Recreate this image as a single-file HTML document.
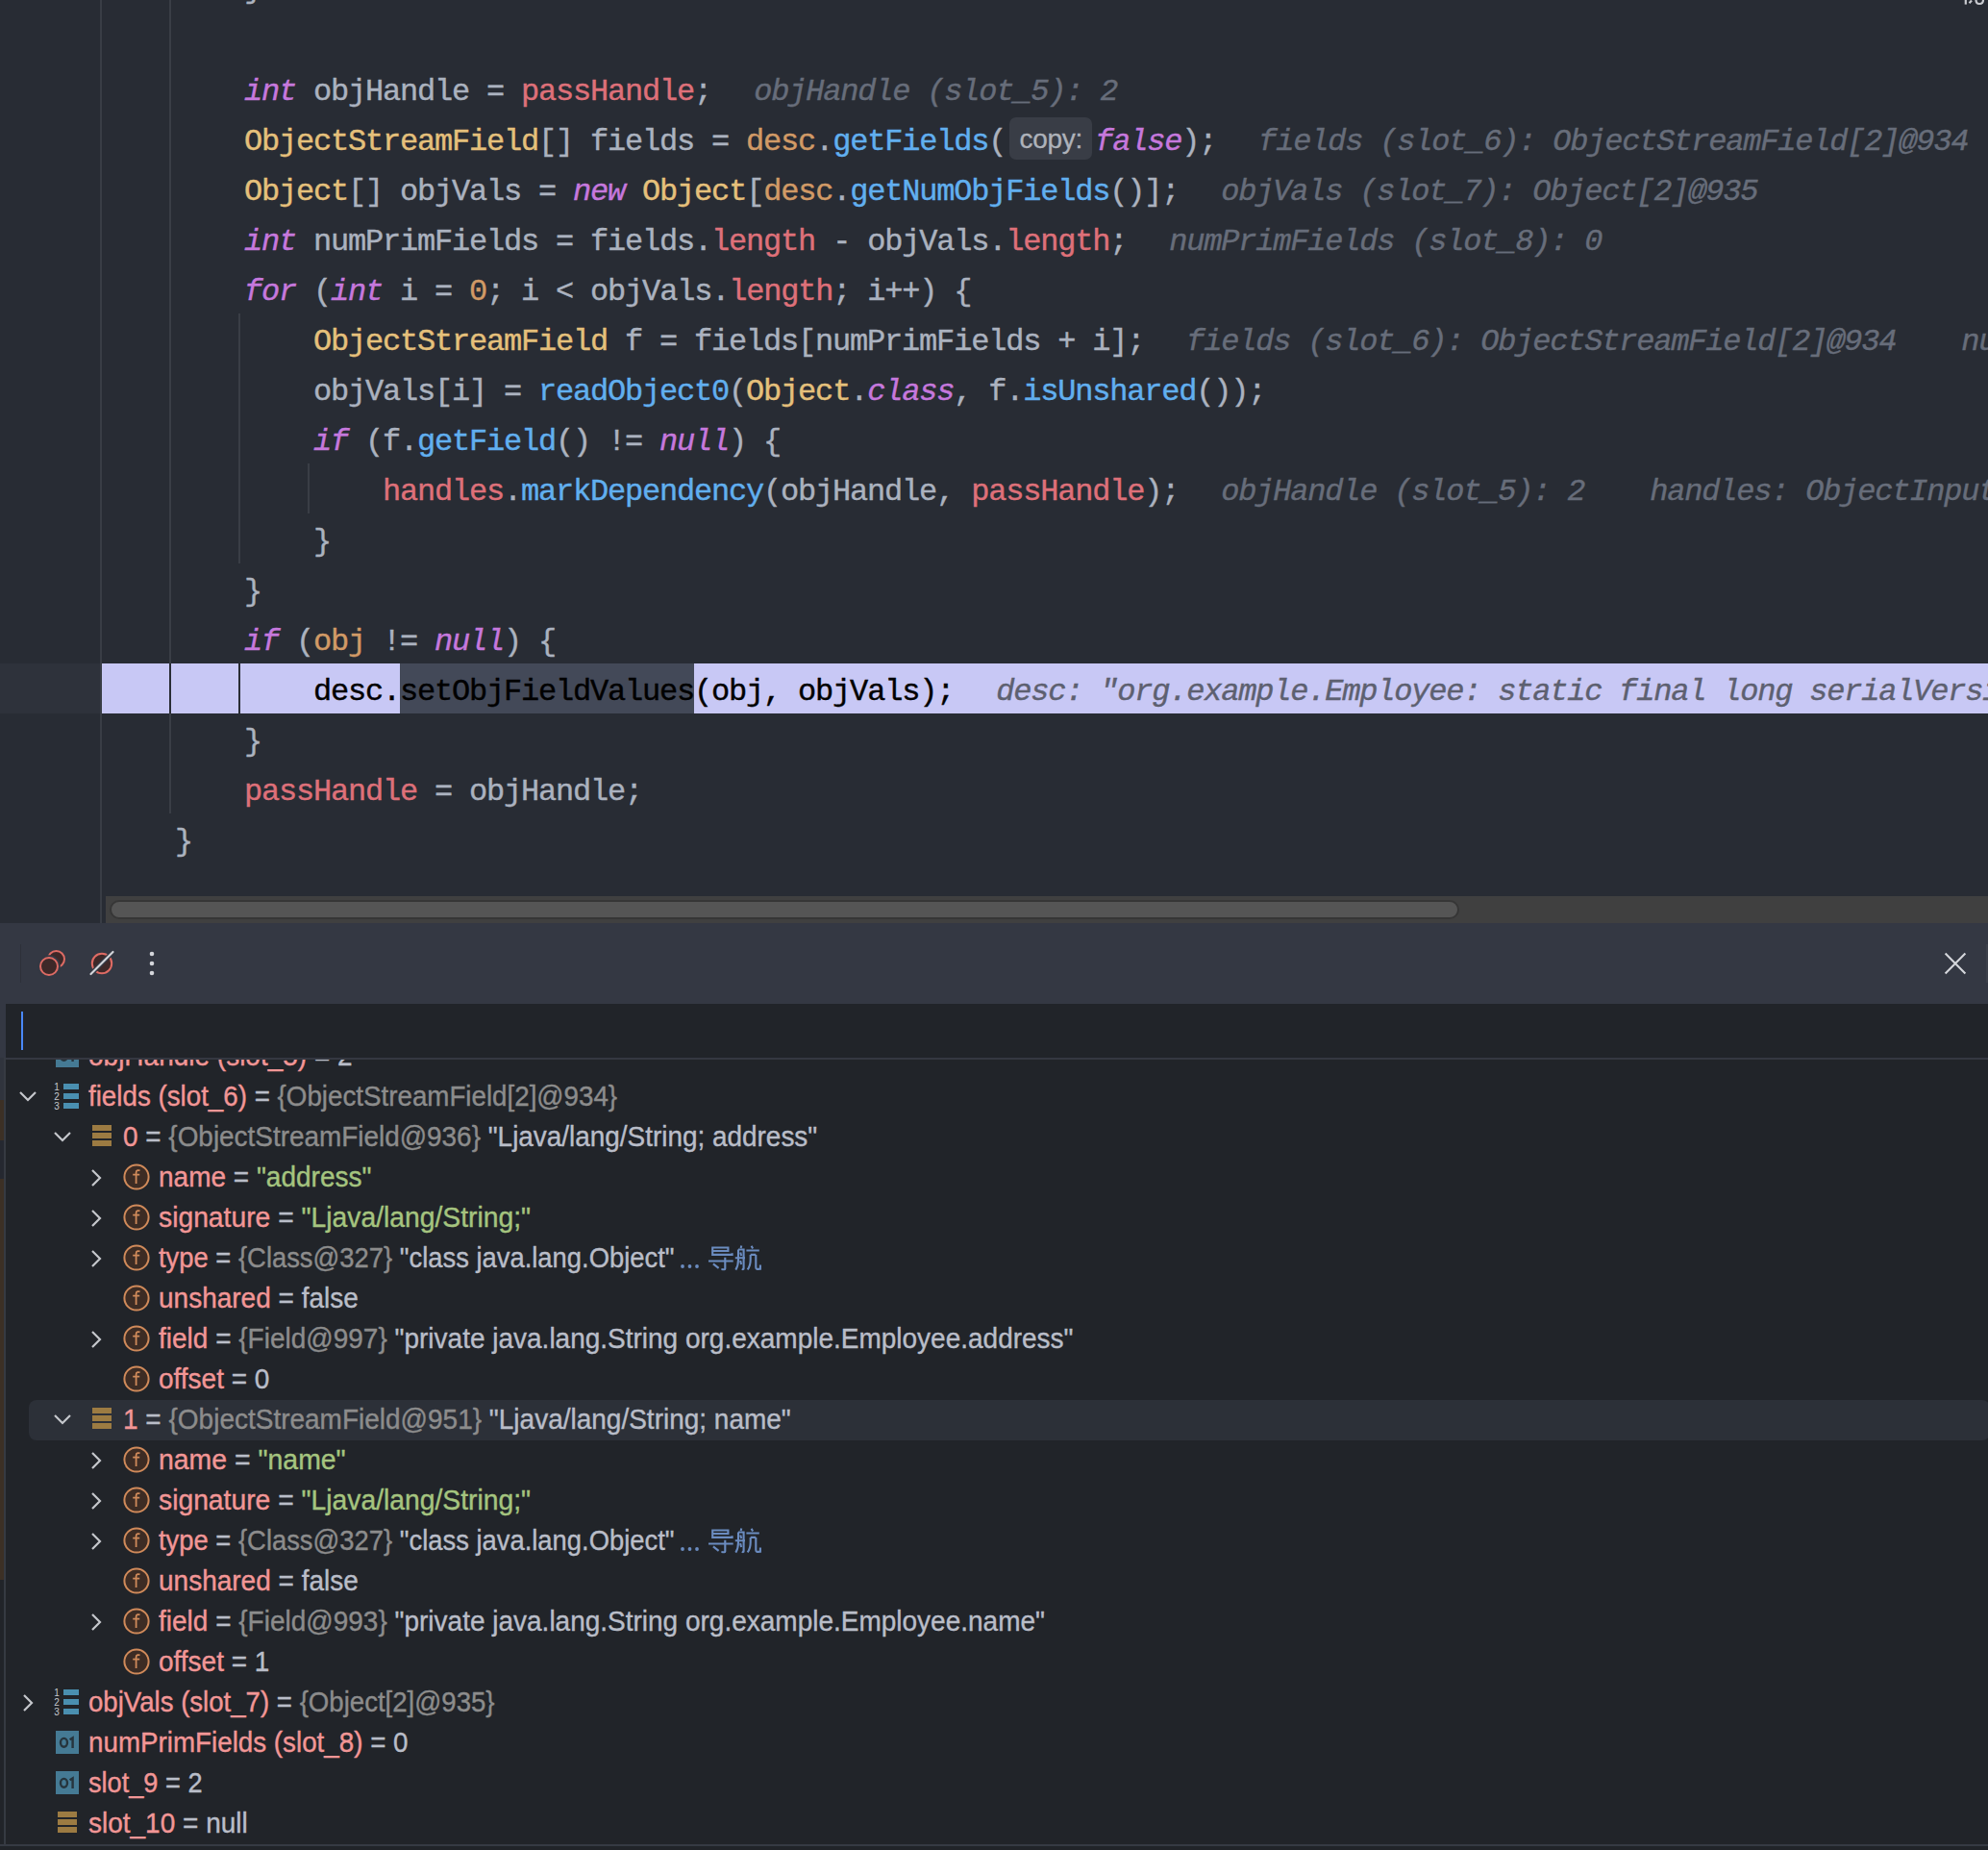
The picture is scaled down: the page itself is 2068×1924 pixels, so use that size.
<!DOCTYPE html><html><head><meta charset="utf-8"><style>
*{margin:0;padding:0;box-sizing:border-box}
html,body{width:2068px;height:1924px;overflow:hidden;background:#282c34}
body{position:relative}
.abs{position:absolute}
.code{position:absolute;font-family:"Liberation Mono",monospace;font-size:32px;letter-spacing:-1.2px;line-height:52px;height:52px;padding-top:4px;white-space:pre;color:#abb2bf;-webkit-text-stroke:0.4px}
.i{font-style:italic}
.hint{font-style:italic;color:#676d7a;margin-left:44px}
.ui{font-family:"Liberation Sans",sans-serif}
</style></head><body>
<div class="abs" style="left:0;top:0;width:2068px;height:960px;background:#282c34;overflow:hidden"><div class="abs" style="left:104px;top:0;width:2px;height:960px;background:#393d45"></div><div class="abs" style="left:0;top:690px;width:104px;height:52px;background:#2e323b"></div><div class="abs" style="left:106px;top:690px;width:1962px;height:52px;background:#c8c8f5"></div><div class="abs" style="left:416px;top:690px;width:306px;height:52px;background:#434958"></div><div class="abs" style="left:176px;top:0;width:2px;height:846px;background:#3a3e46"></div><div class="abs" style="left:248px;top:326px;width:2px;height:260px;background:#3a3e46"></div><div class="abs" style="left:320px;top:482px;width:2px;height:52px;background:#3a3e46"></div><div class="abs" style="left:176px;top:690px;width:2px;height:52px;background:#2a2d35"></div><div class="abs" style="left:248px;top:690px;width:2px;height:52px;background:#2a2d35"></div><div class="code" style="left:254px;top:-41px">}</div><div class="code" style="left:254px;top:66px"><span class="i" style="color:#c678dd;">int</span> objHandle = <span style="color:#de7079;">passHandle</span>;<span class="hint" style="color:#676d7a;margin-left:44px">objHandle (slot_5): 2</span></div><div class="code" style="left:254px;top:118px"><span style="color:#e5c07b;">ObjectStreamField</span>[] fields = <span style="color:#d19a66;">desc</span>.<span style="color:#61afef;">getFields</span>(<span style="display:inline-block;width:93px;height:52px;vertical-align:top;position:relative"><span class="ui" style="position:absolute;left:4px;top:0px;width:86px;height:44px;padding-top:1px;border-radius:7px;background:#393d46;color:#aeb2ba;font-size:28px;line-height:44px;text-align:center;-webkit-text-stroke:0.3px;letter-spacing:-0.3px">copy:</span></span><span class="i" style="color:#c678dd;">false</span>);<span class="hint" style="color:#676d7a;margin-left:44px">fields (slot_6): ObjectStreamField[2]@934</span></div><div class="code" style="left:254px;top:170px"><span style="color:#e5c07b;">Object</span>[] objVals = <span class="i" style="color:#c678dd;">new</span> <span style="color:#e5c07b;">Object</span>[<span style="color:#d19a66;">desc</span>.<span style="color:#61afef;">getNumObjFields</span>()];<span class="hint" style="color:#676d7a;margin-left:44px">objVals (slot_7): Object[2]@935</span></div><div class="code" style="left:254px;top:222px"><span class="i" style="color:#c678dd;">int</span> numPrimFields = fields.<span style="color:#de7079;">length</span> - objVals.<span style="color:#de7079;">length</span>;<span class="hint" style="color:#676d7a;margin-left:44px">numPrimFields (slot_8): 0</span></div><div class="code" style="left:254px;top:274px"><span class="i" style="color:#c678dd;">for</span> (<span class="i" style="color:#c678dd;">int</span> i = <span style="color:#d19a66;">0</span>; i &lt; objVals.<span style="color:#de7079;">length</span>; i++) {</div><div class="code" style="left:326px;top:326px"><span style="color:#e5c07b;">ObjectStreamField</span> f = fields[numPrimFields + i];<span class="hint" style="color:#676d7a;margin-left:44px">fields (slot_6): ObjectStreamField[2]@934</span><span class="hint" style="color:#676d7a;margin-left:68px">numPrimFields (slot_8): 0</span></div><div class="code" style="left:326px;top:378px">objVals[i] = <span style="color:#61afef;">readObject0</span>(<span style="color:#e5c07b;">Object</span>.<span class="i" style="color:#c678dd;">class</span>, f.<span style="color:#61afef;">isUnshared</span>());</div><div class="code" style="left:326px;top:430px"><span class="i" style="color:#c678dd;">if</span> (f.<span style="color:#61afef;">getField</span>() != <span class="i" style="color:#c678dd;">null</span>) {</div><div class="code" style="left:398px;top:482px"><span style="color:#de7079;">handles</span>.<span style="color:#61afef;">markDependency</span>(objHandle, <span style="color:#de7079;">passHandle</span>);<span class="hint" style="color:#676d7a;margin-left:44px">objHandle (slot_5): 2</span><span class="hint" style="color:#676d7a;margin-left:68px">handles: ObjectInputStream$HandleTable@1000</span></div><div class="code" style="left:326px;top:534px">}</div><div class="code" style="left:254px;top:586px">}</div><div class="code" style="left:254px;top:638px"><span class="i" style="color:#c678dd;">if</span> (<span style="color:#d19a66;">obj</span> != <span class="i" style="color:#c678dd;">null</span>) {</div><div class="code" style="left:326px;top:690px"><span style="color:#000;">desc.</span><span style="color:#000">setObjFieldValues</span><span style="color:#000;">(obj, objVals);</span><span class="hint" style="color:#5d6070;margin-left:44px">desc: &quot;org.example.Employee: static final long serialVersionUID&quot;</span></div><div class="code" style="left:254px;top:742px">}</div><div class="code" style="left:254px;top:794px"><span style="color:#de7079;">passHandle</span> = objHandle;</div><div class="code" style="left:182px;top:846px">}</div><div class="abs" style="left:110px;top:932px;width:1958px;height:28px;background:#404040"></div><div class="abs" style="left:114px;top:936px;width:1404px;height:20px;border-radius:10px;background:#555555;border:2px solid #363636"></div><svg class="abs" style="left:2040px;top:0" width="28" height="6" viewBox="0 0 28 6"><g fill="none" stroke="#c9cbd0" stroke-width="2.2"><path d="M4.8 0V4.6"/><path d="M8.5 3.2L11 0.5"/><path d="M15.5 0C15.5 3.5 17 4 19 4C21 4 23 3.5 23 0"/></g></svg></div><div class="abs" style="left:0;top:960px;width:2068px;height:84px;background:#343843"></div><div class="abs" style="left:21px;top:982px;width:1px;height:40px;background:#2d3039"></div><div class="abs" style="left:2066px;top:982px;width:2px;height:40px;background:#3c404a"></div><svg class="abs" style="left:30px;top:980px" width="150" height="44" viewBox="0 0 150 44">
<circle cx="28.5" cy="17.5" r="8.5" fill="#3e2828" stroke="#de6b64" stroke-width="2"/>
<circle cx="21" cy="25" r="11.8" fill="#343843"/>
<circle cx="21" cy="25" r="9" fill="#3e2828" stroke="#de6b64" stroke-width="2"/>
<circle cx="76" cy="22" r="10.2" fill="#3e2828" stroke="#de6b64" stroke-width="2"/>
<line x1="64.5" y1="33" x2="87.5" y2="10" stroke="#343843" stroke-width="5"/>
<line x1="64.5" y1="33" x2="87.5" y2="10" stroke="#d4d6db" stroke-width="2.2" stroke-linecap="round"/>
<circle cx="128" cy="12" r="2.3" fill="#d4d6db"/><circle cx="128" cy="22" r="2.3" fill="#d4d6db"/><circle cx="128" cy="32" r="2.3" fill="#d4d6db"/>
</svg><svg class="abs" style="left:2020px;top:988px" width="28" height="28" viewBox="0 0 28 28"><path d="M3.6 3.6L24.4 24.4M24.4 3.6L3.6 24.4" stroke="#d4d6db" stroke-width="2.1"/></svg><div class="abs" style="left:0;top:1044px;width:2068px;height:880px;background:#212429"></div><div class="abs" style="left:0;top:1044px;width:6px;height:56px;background:#343843"></div><div class="abs" style="left:6px;top:1044px;width:2062px;height:56px;background:#212429"></div><div class="abs" style="left:22px;top:1052px;width:2px;height:40px;background:#4a88f7"></div><div class="abs" style="left:6px;top:1100px;width:2062px;height:2px;background:#353841"></div><div class="abs" style="left:0;top:1100px;width:4px;height:44px;background:#30343d"></div><div class="abs" style="left:0;top:1144px;width:4px;height:42px;background:#3c3025"></div><div class="abs" style="left:0;top:1186px;width:4px;height:40px;background:#252830"></div><div class="abs" style="left:0;top:1226px;width:4px;height:417px;background:#3c3025"></div><div class="abs" style="left:4px;top:1100px;width:2px;height:818px;background:#363a42"></div><div class="abs" style="left:0;top:1918px;width:2068px;height:2px;background:#363a43"></div><div class="abs" style="left:6px;top:1102px;width:2062px;height:815px;overflow:hidden"><div class="abs" style="left:24px;top:354px;width:2040px;height:42px;border-radius:8px;background:#2c3038"></div><svg class="abs" style="left:52px;top:-16px" width="24" height="24" viewBox="0 0 24 24"><rect width="24" height="24" fill="#457a94"/><ellipse cx="8.5" cy="12.3" rx="3.5" ry="4.4" fill="none" stroke="#26343c" stroke-width="2.4"/><path d="M14.6 9.2L17.6 7.4V18" fill="none" stroke="#26343c" stroke-width="2.4"/></svg><div class="abs ui" style="left:86px;top:-25px;height:42px;line-height:42px;font-size:30px;white-space:pre;transform:scaleX(0.9330);transform-origin:0 0;-webkit-text-stroke:0.4px"><span style="color:#f29696">objHandle (slot_5)</span><span style="color:#b9bdc8"> = </span><span style="color:#b9bdc8">2</span></div><svg class="abs" style="left:13px;top:31px" width="20" height="14" viewBox="0 0 20 14"><path d="M2 3L10 11L18 3" fill="none" stroke="#c5c7cc" stroke-width="2.2"/></svg><svg class="abs" style="left:49px;top:23px" width="28" height="30" viewBox="0 0 28 30"><text x="4" y="9" text-anchor="middle" font-family="Liberation Sans" font-size="10" fill="#c5c7cc">1</text><text x="4" y="19" text-anchor="middle" font-family="Liberation Sans" font-size="10" fill="#c5c7cc">2</text><text x="4" y="29" text-anchor="middle" font-family="Liberation Sans" font-size="10" fill="#c5c7cc">3</text><rect x="11" y="2" width="16" height="6" fill="#4a8fb0"/><rect x="11" y="12" width="16" height="6" fill="#4a8fb0"/><rect x="11" y="22" width="16" height="6" fill="#4a8fb0"/></svg><div class="abs ui" style="left:86px;top:17px;height:42px;line-height:42px;font-size:30px;white-space:pre;transform:scaleX(0.9246);transform-origin:0 0;-webkit-text-stroke:0.4px"><span style="color:#f29696">fields (slot_6)</span><span style="color:#b9bdc8"> = </span><span style="color:#8c8c8c">{ObjectStreamField[2]@934}</span></div><svg class="abs" style="left:49px;top:73px" width="20" height="14" viewBox="0 0 20 14"><path d="M2 3L10 11L18 3" fill="none" stroke="#c5c7cc" stroke-width="2.2"/></svg><svg class="abs" style="left:90px;top:68px" width="20" height="22" viewBox="0 0 20 22"><rect x="0" y="0" width="20" height="6" fill="#9c7b42"/><rect x="0" y="8" width="20" height="6" fill="#9c7b42"/><rect x="0" y="16" width="20" height="6" fill="#9c7b42"/></svg><div class="abs ui" style="left:122px;top:59px;height:42px;line-height:42px;font-size:30px;white-space:pre;transform:scaleX(0.9302);transform-origin:0 0;-webkit-text-stroke:0.4px"><span style="color:#f29696">0</span><span style="color:#b9bdc8"> = </span><span style="color:#8c8c8c">{ObjectStreamField@936}</span><span style="color:#b9bdc8"> &quot;Ljava/lang/String; address&quot;</span></div><svg class="abs" style="left:87px;top:113px" width="14" height="20" viewBox="0 0 14 20"><path d="M3 2L11 10L3 18" fill="none" stroke="#c5c7cc" stroke-width="2.2"/></svg><svg class="abs" style="left:122px;top:108px" width="28" height="28" viewBox="0 0 28 28"><circle cx="14" cy="14" r="12.6" fill="#3d2c24" stroke="#d08a5a" stroke-width="2"/><path d="M17.5 7.5C16.5 6.8 13.6 6.6 13.6 9.4V21M10.2 11.6H17.2" fill="none" stroke="#d08a5a" stroke-width="1.8"/></svg><div class="abs ui" style="left:159px;top:101px;height:42px;line-height:42px;font-size:30px;white-space:pre;transform:scaleX(0.9330);transform-origin:0 0;-webkit-text-stroke:0.4px"><span style="color:#f29696">name</span><span style="color:#b9bdc8"> = </span><span style="color:#a5c47f">&quot;address&quot;</span></div><svg class="abs" style="left:87px;top:155px" width="14" height="20" viewBox="0 0 14 20"><path d="M3 2L11 10L3 18" fill="none" stroke="#c5c7cc" stroke-width="2.2"/></svg><svg class="abs" style="left:122px;top:150px" width="28" height="28" viewBox="0 0 28 28"><circle cx="14" cy="14" r="12.6" fill="#3d2c24" stroke="#d08a5a" stroke-width="2"/><path d="M17.5 7.5C16.5 6.8 13.6 6.6 13.6 9.4V21M10.2 11.6H17.2" fill="none" stroke="#d08a5a" stroke-width="1.8"/></svg><div class="abs ui" style="left:159px;top:143px;height:42px;line-height:42px;font-size:30px;white-space:pre;transform:scaleX(0.9423);transform-origin:0 0;-webkit-text-stroke:0.4px"><span style="color:#f29696">signature</span><span style="color:#b9bdc8"> = </span><span style="color:#a5c47f">&quot;Ljava/lang/String;&quot;</span></div><svg class="abs" style="left:87px;top:197px" width="14" height="20" viewBox="0 0 14 20"><path d="M3 2L11 10L3 18" fill="none" stroke="#c5c7cc" stroke-width="2.2"/></svg><svg class="abs" style="left:122px;top:192px" width="28" height="28" viewBox="0 0 28 28"><circle cx="14" cy="14" r="12.6" fill="#3d2c24" stroke="#d08a5a" stroke-width="2"/><path d="M17.5 7.5C16.5 6.8 13.6 6.6 13.6 9.4V21M10.2 11.6H17.2" fill="none" stroke="#d08a5a" stroke-width="1.8"/></svg><svg class="abs" style="left:699px;top:192.5px" width="92" height="30" viewBox="0 0 92 30"><g fill="none" stroke="#6b8cc0" stroke-width="2.1" stroke-linecap="butt"><circle cx="5" cy="22" r="1.9" fill="#6b8cc0" stroke="none"/><circle cx="12.5" cy="22" r="1.9" fill="#6b8cc0" stroke="none"/><circle cx="20" cy="22" r="1.9" fill="#6b8cc0" stroke="none"/><g transform="translate(32,0)"><path d="M3.2 2.5H20.4V6H4.2M4.2 2.5V9.9H24.6V8.3"/><path d="M0 16.5H25.7M17.3 12.7V24.4C17.3 25.3 16.5 25.3 13.4 25"/><path d="M4.9 19.4L10.6 23.9"/><path d="M34.3 0.5L33.6 3M31 4.5V15C31 20 30 23 28.3 25.6M31 4.5H36.6V24.2C36.6 25.3 35.9 25.3 34.8 24.6M33.2 7.5L34.2 11M33.1 16L34.1 20M27.8 13.2H38"/><path d="M44.6 0.7L46.1 3.6M39.4 5.5H52.8M43.7 9.9H49.3M43.7 9.9V15C43.7 20 42.5 23 40.6 25.4M49.3 9.9V23C49.3 25 50 25 53.9 24.8V20.4"/></g></g></svg><div class="abs ui" style="left:159px;top:185px;height:42px;line-height:42px;font-size:30px;white-space:pre;transform:scaleX(0.9125);transform-origin:0 0;-webkit-text-stroke:0.4px"><span style="color:#f29696">type</span><span style="color:#b9bdc8"> = </span><span style="color:#8c8c8c">{Class@327}</span><span style="color:#b9bdc8"> &quot;class java.lang.Object&quot;</span></div><svg class="abs" style="left:122px;top:234px" width="28" height="28" viewBox="0 0 28 28"><circle cx="14" cy="14" r="12.6" fill="#3d2c24" stroke="#d08a5a" stroke-width="2"/><path d="M17.5 7.5C16.5 6.8 13.6 6.6 13.6 9.4V21M10.2 11.6H17.2" fill="none" stroke="#d08a5a" stroke-width="1.8"/></svg><div class="abs ui" style="left:159px;top:227px;height:42px;line-height:42px;font-size:30px;white-space:pre;transform:scaleX(0.9330);transform-origin:0 0;-webkit-text-stroke:0.4px"><span style="color:#f29696">unshared</span><span style="color:#b9bdc8"> = </span><span style="color:#b9bdc8">false</span></div><svg class="abs" style="left:87px;top:281px" width="14" height="20" viewBox="0 0 14 20"><path d="M3 2L11 10L3 18" fill="none" stroke="#c5c7cc" stroke-width="2.2"/></svg><svg class="abs" style="left:122px;top:276px" width="28" height="28" viewBox="0 0 28 28"><circle cx="14" cy="14" r="12.6" fill="#3d2c24" stroke="#d08a5a" stroke-width="2"/><path d="M17.5 7.5C16.5 6.8 13.6 6.6 13.6 9.4V21M10.2 11.6H17.2" fill="none" stroke="#d08a5a" stroke-width="1.8"/></svg><div class="abs ui" style="left:159px;top:269px;height:42px;line-height:42px;font-size:30px;white-space:pre;transform:scaleX(0.9330);transform-origin:0 0;-webkit-text-stroke:0.4px"><span style="color:#f29696">field</span><span style="color:#b9bdc8"> = </span><span style="color:#8c8c8c">{Field@997}</span><span style="color:#b9bdc8"> &quot;private java.lang.String org.example.Employee.address&quot;</span></div><svg class="abs" style="left:122px;top:318px" width="28" height="28" viewBox="0 0 28 28"><circle cx="14" cy="14" r="12.6" fill="#3d2c24" stroke="#d08a5a" stroke-width="2"/><path d="M17.5 7.5C16.5 6.8 13.6 6.6 13.6 9.4V21M10.2 11.6H17.2" fill="none" stroke="#d08a5a" stroke-width="1.8"/></svg><div class="abs ui" style="left:159px;top:311px;height:42px;line-height:42px;font-size:30px;white-space:pre;transform:scaleX(0.9330);transform-origin:0 0;-webkit-text-stroke:0.4px"><span style="color:#f29696">offset</span><span style="color:#b9bdc8"> = </span><span style="color:#b9bdc8">0</span></div><svg class="abs" style="left:49px;top:367px" width="20" height="14" viewBox="0 0 20 14"><path d="M2 3L10 11L18 3" fill="none" stroke="#c5c7cc" stroke-width="2.2"/></svg><svg class="abs" style="left:90px;top:362px" width="20" height="22" viewBox="0 0 20 22"><rect x="0" y="0" width="20" height="6" fill="#9c7b42"/><rect x="0" y="8" width="20" height="6" fill="#9c7b42"/><rect x="0" y="16" width="20" height="6" fill="#9c7b42"/></svg><div class="abs ui" style="left:122px;top:353px;height:42px;line-height:42px;font-size:30px;white-space:pre;transform:scaleX(0.9330);transform-origin:0 0;-webkit-text-stroke:0.4px"><span style="color:#f29696">1</span><span style="color:#b9bdc8"> = </span><span style="color:#8c8c8c">{ObjectStreamField@951}</span><span style="color:#b9bdc8"> &quot;Ljava/lang/String; name&quot;</span></div><svg class="abs" style="left:87px;top:407px" width="14" height="20" viewBox="0 0 14 20"><path d="M3 2L11 10L3 18" fill="none" stroke="#c5c7cc" stroke-width="2.2"/></svg><svg class="abs" style="left:122px;top:402px" width="28" height="28" viewBox="0 0 28 28"><circle cx="14" cy="14" r="12.6" fill="#3d2c24" stroke="#d08a5a" stroke-width="2"/><path d="M17.5 7.5C16.5 6.8 13.6 6.6 13.6 9.4V21M10.2 11.6H17.2" fill="none" stroke="#d08a5a" stroke-width="1.8"/></svg><div class="abs ui" style="left:159px;top:395px;height:42px;line-height:42px;font-size:30px;white-space:pre;transform:scaleX(0.9470);transform-origin:0 0;-webkit-text-stroke:0.4px"><span style="color:#f29696">name</span><span style="color:#b9bdc8"> = </span><span style="color:#a5c47f">&quot;name&quot;</span></div><svg class="abs" style="left:87px;top:449px" width="14" height="20" viewBox="0 0 14 20"><path d="M3 2L11 10L3 18" fill="none" stroke="#c5c7cc" stroke-width="2.2"/></svg><svg class="abs" style="left:122px;top:444px" width="28" height="28" viewBox="0 0 28 28"><circle cx="14" cy="14" r="12.6" fill="#3d2c24" stroke="#d08a5a" stroke-width="2"/><path d="M17.5 7.5C16.5 6.8 13.6 6.6 13.6 9.4V21M10.2 11.6H17.2" fill="none" stroke="#d08a5a" stroke-width="1.8"/></svg><div class="abs ui" style="left:159px;top:437px;height:42px;line-height:42px;font-size:30px;white-space:pre;transform:scaleX(0.9423);transform-origin:0 0;-webkit-text-stroke:0.4px"><span style="color:#f29696">signature</span><span style="color:#b9bdc8"> = </span><span style="color:#a5c47f">&quot;Ljava/lang/String;&quot;</span></div><svg class="abs" style="left:87px;top:491px" width="14" height="20" viewBox="0 0 14 20"><path d="M3 2L11 10L3 18" fill="none" stroke="#c5c7cc" stroke-width="2.2"/></svg><svg class="abs" style="left:122px;top:486px" width="28" height="28" viewBox="0 0 28 28"><circle cx="14" cy="14" r="12.6" fill="#3d2c24" stroke="#d08a5a" stroke-width="2"/><path d="M17.5 7.5C16.5 6.8 13.6 6.6 13.6 9.4V21M10.2 11.6H17.2" fill="none" stroke="#d08a5a" stroke-width="1.8"/></svg><svg class="abs" style="left:699px;top:486.5px" width="92" height="30" viewBox="0 0 92 30"><g fill="none" stroke="#6b8cc0" stroke-width="2.1" stroke-linecap="butt"><circle cx="5" cy="22" r="1.9" fill="#6b8cc0" stroke="none"/><circle cx="12.5" cy="22" r="1.9" fill="#6b8cc0" stroke="none"/><circle cx="20" cy="22" r="1.9" fill="#6b8cc0" stroke="none"/><g transform="translate(32,0)"><path d="M3.2 2.5H20.4V6H4.2M4.2 2.5V9.9H24.6V8.3"/><path d="M0 16.5H25.7M17.3 12.7V24.4C17.3 25.3 16.5 25.3 13.4 25"/><path d="M4.9 19.4L10.6 23.9"/><path d="M34.3 0.5L33.6 3M31 4.5V15C31 20 30 23 28.3 25.6M31 4.5H36.6V24.2C36.6 25.3 35.9 25.3 34.8 24.6M33.2 7.5L34.2 11M33.1 16L34.1 20M27.8 13.2H38"/><path d="M44.6 0.7L46.1 3.6M39.4 5.5H52.8M43.7 9.9H49.3M43.7 9.9V15C43.7 20 42.5 23 40.6 25.4M49.3 9.9V23C49.3 25 50 25 53.9 24.8V20.4"/></g></g></svg><div class="abs ui" style="left:159px;top:479px;height:42px;line-height:42px;font-size:30px;white-space:pre;transform:scaleX(0.9125);transform-origin:0 0;-webkit-text-stroke:0.4px"><span style="color:#f29696">type</span><span style="color:#b9bdc8"> = </span><span style="color:#8c8c8c">{Class@327}</span><span style="color:#b9bdc8"> &quot;class java.lang.Object&quot;</span></div><svg class="abs" style="left:122px;top:528px" width="28" height="28" viewBox="0 0 28 28"><circle cx="14" cy="14" r="12.6" fill="#3d2c24" stroke="#d08a5a" stroke-width="2"/><path d="M17.5 7.5C16.5 6.8 13.6 6.6 13.6 9.4V21M10.2 11.6H17.2" fill="none" stroke="#d08a5a" stroke-width="1.8"/></svg><div class="abs ui" style="left:159px;top:521px;height:42px;line-height:42px;font-size:30px;white-space:pre;transform:scaleX(0.9330);transform-origin:0 0;-webkit-text-stroke:0.4px"><span style="color:#f29696">unshared</span><span style="color:#b9bdc8"> = </span><span style="color:#b9bdc8">false</span></div><svg class="abs" style="left:87px;top:575px" width="14" height="20" viewBox="0 0 14 20"><path d="M3 2L11 10L3 18" fill="none" stroke="#c5c7cc" stroke-width="2.2"/></svg><svg class="abs" style="left:122px;top:570px" width="28" height="28" viewBox="0 0 28 28"><circle cx="14" cy="14" r="12.6" fill="#3d2c24" stroke="#d08a5a" stroke-width="2"/><path d="M17.5 7.5C16.5 6.8 13.6 6.6 13.6 9.4V21M10.2 11.6H17.2" fill="none" stroke="#d08a5a" stroke-width="1.8"/></svg><div class="abs ui" style="left:159px;top:563px;height:42px;line-height:42px;font-size:30px;white-space:pre;transform:scaleX(0.9330);transform-origin:0 0;-webkit-text-stroke:0.4px"><span style="color:#f29696">field</span><span style="color:#b9bdc8"> = </span><span style="color:#8c8c8c">{Field@993}</span><span style="color:#b9bdc8"> &quot;private java.lang.String org.example.Employee.name&quot;</span></div><svg class="abs" style="left:122px;top:612px" width="28" height="28" viewBox="0 0 28 28"><circle cx="14" cy="14" r="12.6" fill="#3d2c24" stroke="#d08a5a" stroke-width="2"/><path d="M17.5 7.5C16.5 6.8 13.6 6.6 13.6 9.4V21M10.2 11.6H17.2" fill="none" stroke="#d08a5a" stroke-width="1.8"/></svg><div class="abs ui" style="left:159px;top:605px;height:42px;line-height:42px;font-size:30px;white-space:pre;transform:scaleX(0.9330);transform-origin:0 0;-webkit-text-stroke:0.4px"><span style="color:#f29696">offset</span><span style="color:#b9bdc8"> = </span><span style="color:#b9bdc8">1</span></div><svg class="abs" style="left:16px;top:659px" width="14" height="20" viewBox="0 0 14 20"><path d="M3 2L11 10L3 18" fill="none" stroke="#c5c7cc" stroke-width="2.2"/></svg><svg class="abs" style="left:49px;top:653px" width="28" height="30" viewBox="0 0 28 30"><text x="4" y="9" text-anchor="middle" font-family="Liberation Sans" font-size="10" fill="#c5c7cc">1</text><text x="4" y="19" text-anchor="middle" font-family="Liberation Sans" font-size="10" fill="#c5c7cc">2</text><text x="4" y="29" text-anchor="middle" font-family="Liberation Sans" font-size="10" fill="#c5c7cc">3</text><rect x="11" y="2" width="16" height="6" fill="#4a8fb0"/><rect x="11" y="12" width="16" height="6" fill="#4a8fb0"/><rect x="11" y="22" width="16" height="6" fill="#4a8fb0"/></svg><div class="abs ui" style="left:86px;top:647px;height:42px;line-height:42px;font-size:30px;white-space:pre;transform:scaleX(0.9199);transform-origin:0 0;-webkit-text-stroke:0.4px"><span style="color:#f29696">objVals (slot_7)</span><span style="color:#b9bdc8"> = </span><span style="color:#8c8c8c">{Object[2]@935}</span></div><svg class="abs" style="left:52px;top:698px" width="24" height="24" viewBox="0 0 24 24"><rect width="24" height="24" fill="#457a94"/><ellipse cx="8.5" cy="12.3" rx="3.5" ry="4.4" fill="none" stroke="#26343c" stroke-width="2.4"/><path d="M14.6 9.2L17.6 7.4V18" fill="none" stroke="#26343c" stroke-width="2.4"/></svg><div class="abs ui" style="left:86px;top:689px;height:42px;line-height:42px;font-size:30px;white-space:pre;transform:scaleX(0.9255);transform-origin:0 0;-webkit-text-stroke:0.4px"><span style="color:#f29696">numPrimFields (slot_8)</span><span style="color:#b9bdc8"> = </span><span style="color:#b9bdc8">0</span></div><svg class="abs" style="left:52px;top:740px" width="24" height="24" viewBox="0 0 24 24"><rect width="24" height="24" fill="#457a94"/><ellipse cx="8.5" cy="12.3" rx="3.5" ry="4.4" fill="none" stroke="#26343c" stroke-width="2.4"/><path d="M14.6 9.2L17.6 7.4V18" fill="none" stroke="#26343c" stroke-width="2.4"/></svg><div class="abs ui" style="left:86px;top:731px;height:42px;line-height:42px;font-size:30px;white-space:pre;transform:scaleX(0.9050);transform-origin:0 0;-webkit-text-stroke:0.4px"><span style="color:#f29696">slot_9</span><span style="color:#b9bdc8"> = </span><span style="color:#b9bdc8">2</span></div><svg class="abs" style="left:54px;top:782px" width="20" height="22" viewBox="0 0 20 22"><rect x="0" y="0" width="20" height="6" fill="#9c7b42"/><rect x="0" y="8" width="20" height="6" fill="#9c7b42"/><rect x="0" y="16" width="20" height="6" fill="#9c7b42"/></svg><div class="abs ui" style="left:86px;top:773px;height:42px;line-height:42px;font-size:30px;white-space:pre;transform:scaleX(0.9330);transform-origin:0 0;-webkit-text-stroke:0.4px"><span style="color:#f29696">slot_10</span><span style="color:#b9bdc8"> = </span><span style="color:#b9bdc8">null</span></div></div></body></html>
